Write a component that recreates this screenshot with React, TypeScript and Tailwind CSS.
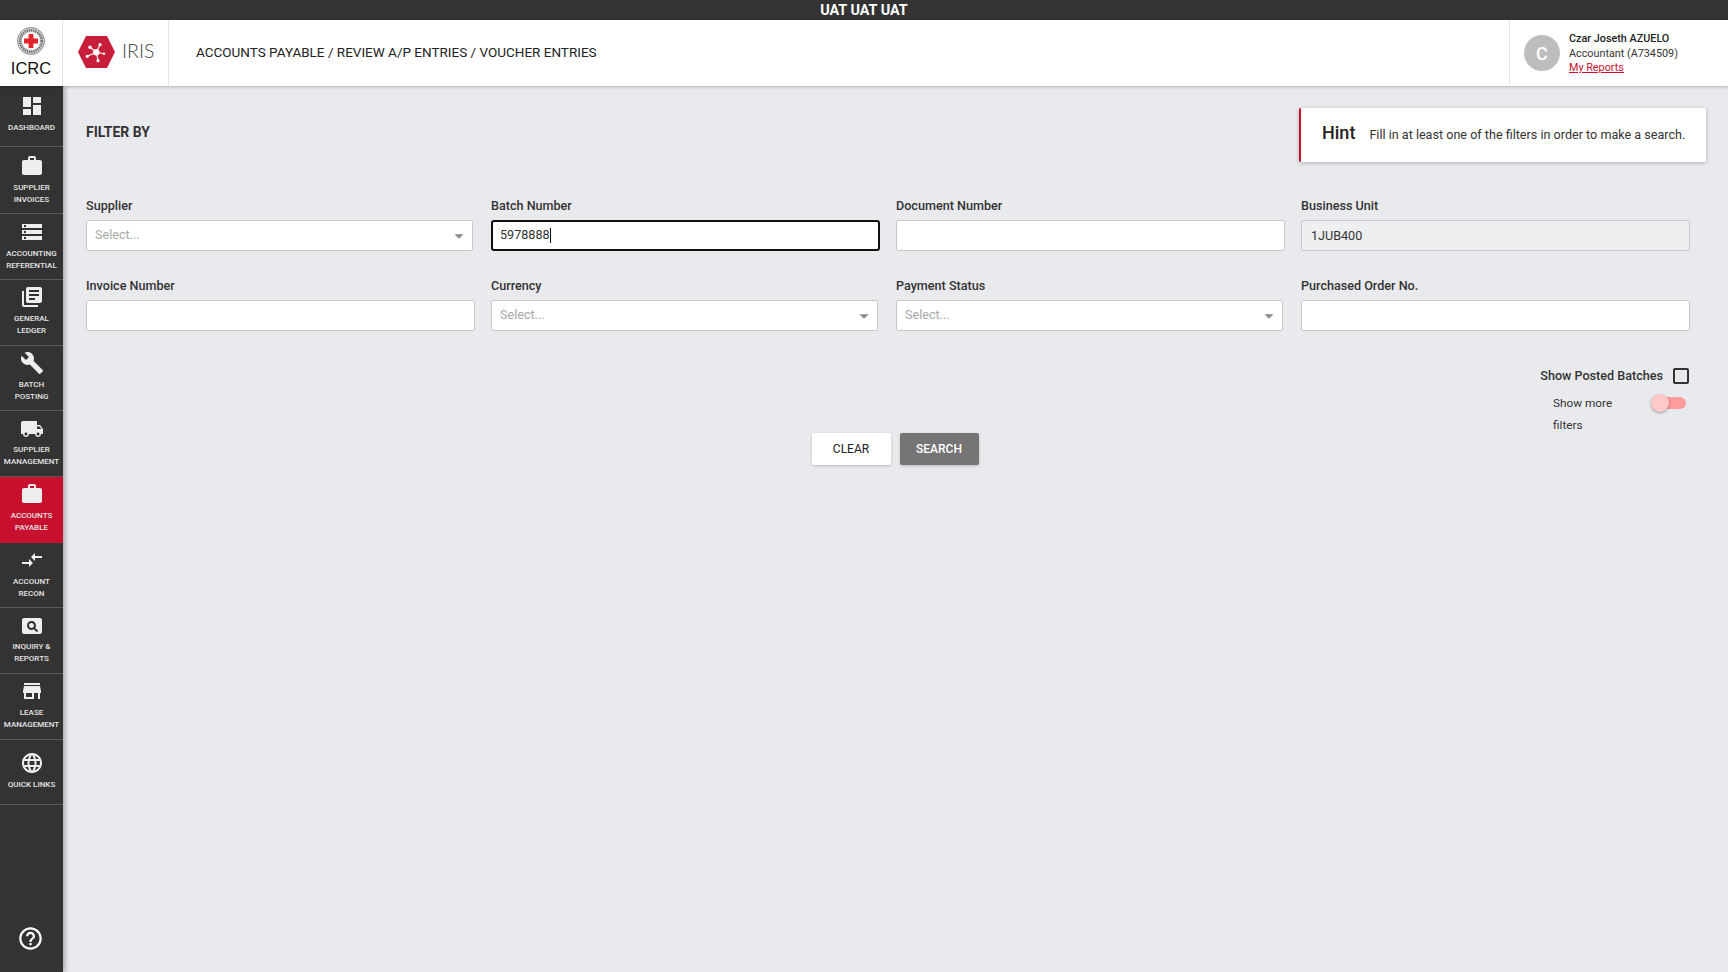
import React from "react";
import {
  MdDashboard, MdWork, MdStorage, MdLibraryBooks, MdBuild, MdLocalShipping,
  MdCompareArrows, MdPageview, MdStore, MdLanguage, MdHelpOutline, MdArrowDropDown,
} from "react-icons/md";

const NAV = [
  { icon: MdDashboard, lines: ["DASHBOARD"], h: "h-[61px]", pt: "pt-[8px]", mt: "mt-[4px]" },
  { icon: MdWork, lines: ["SUPPLIER", "INVOICES"], h: "h-[67px]", pt: "pt-[7px]", mt: "mt-[4px]" },
  { icon: MdStorage, lines: ["ACCOUNTING", "REFERENTIAL"], h: "h-[66px]", pt: "pt-[6px]", mt: "mt-[4px]" },
  { icon: MdLibraryBooks, lines: ["GENERAL", "LEDGER"], h: "h-[66px]", pt: "pt-[5px]", mt: "mt-[4px]" },
  { icon: MdBuild, lines: ["BATCH", "POSTING"], h: "h-[65px]", pt: "pt-[5px]", mt: "mt-[4px]" },
  { icon: MdLocalShipping, lines: ["SUPPLIER", "MANAGEMENT"], h: "h-[66px]", pt: "pt-[6px]", mt: "mt-[3px]" },
  { icon: MdWork, lines: ["ACCOUNTS", "PAYABLE"], h: "h-[66px]", pt: "pt-[5px]", mt: "mt-[4px]", active: true },
  { icon: MdCompareArrows, lines: ["ACCOUNT", "RECON"], h: "h-[65px]", pt: "pt-[5px]", mt: "mt-[4px]" },
  { icon: MdPageview, lines: ["INQUIRY &", "REPORTS"], h: "h-[66px]", pt: "pt-[6px]", mt: "mt-[3px]" },
  { icon: MdStore, lines: ["LEASE", "MANAGEMENT"], h: "h-[66px]", pt: "pt-[5px]", mt: "mt-[4px]" },
  { icon: MdLanguage, lines: ["QUICK LINKS"], h: "h-[65px]", pt: "pt-[11px]", mt: "mt-[4px]" },
];

function Field({ label, children }: { label: string; children: React.ReactNode }) {
  return (
    <div className="flex flex-col">
      <label className="mb-[4px] h-[20px] text-[12.6px] font-medium leading-[20px] text-[#333333]">{label}</label>
      {children}
    </div>
  );
}

function TextBox({ value, disabled }: { value?: string; disabled?: boolean }) {
  return (
    <div className={`h-[31px] w-full rounded-[2px] border border-[#c8c8c8] px-[9px] text-[12.6px] leading-[29px] text-[#333333] ${disabled ? "bg-[#eeeff1]" : "bg-white"}`}>
      {value}
    </div>
  );
}

function SelectBox() {
  return (
    <div className="flex h-[31px] w-[387px] items-center justify-between rounded-[2px] border border-[#c8c8c8] bg-white pl-[8px] pr-[2px] text-[12.6px] text-[#a8a8a8]">
      <span>Select...</span>
      <MdArrowDropDown className="text-[#8a8a8a]" size={22} />
    </div>
  );
}

function Emblem() {
  return (
    <svg width="28" height="28" viewBox="0 0 28 28">
      <circle cx="14" cy="14" r="13.5" fill="#dcdcdc" stroke="#8a8a8a" strokeWidth="1" />
      <circle cx="14" cy="14" r="10.8" fill="none" stroke="#666" strokeWidth="2.6" strokeDasharray="1.3 0.9" />
      <circle cx="14" cy="14" r="8.8" fill="#fff" />
      <path d="M11.6 7h4.8v4.6H21v4.8h-4.6V21h-4.8v-4.6H7v-4.8h4.6z" fill="#e3232b" />
    </svg>
  );
}

function IrisLogo() {
  return (
    <svg width="37" height="32" viewBox="0 0 37 32">
      <path d="M8 0h21L37 16 29 32H8L0 16z" fill="#c81e3a" />
      <g stroke="#fff" strokeWidth="1.1">
        <path d="M18.3 16.3L12 11.3M18.3 16.3L22 8.7M18.3 16.3L26 17.7M18.3 16.3L20 24.7M18.3 16.3L9.3 20.3" />
      </g>
      <g fill="#fff">
        <circle cx="18.3" cy="16.3" r="3.2" />
        <circle cx="12" cy="11.3" r="1.7" />
        <circle cx="22" cy="8.7" r="1.6" />
        <circle cx="26" cy="17.7" r="1.3" />
        <circle cx="20" cy="24.7" r="1.6" />
        <circle cx="9.3" cy="20.3" r="1.6" />
      </g>
    </svg>
  );
}

export default function App() {
  return (
    <div className="flex h-[972px] w-[1728px] flex-col overflow-hidden bg-[#e9eaee] font-['Roboto',sans-serif]">
      <div className="h-[20px] bg-[#333333] pt-px text-center text-[14.4px] font-bold leading-[20px] text-white">UAT UAT UAT</div>

      <header className="relative z-20 flex h-[66px] items-stretch bg-white shadow-[0_1px_3px_rgba(0,0,0,0.25)]">
        <div className="flex w-[63px] flex-col items-center border-r border-[#e4e4e4] pt-[7px]">
          <Emblem />
          <span className="mt-[3px] font-['Liberation_Sans',sans-serif] text-[16.5px] leading-[20px] text-[#111111]">ICRC</span>
        </div>
        <div className="flex w-[106px] items-center border-r border-[#e4e4e4] pb-[3px] pl-[15px]">
          <IrisLogo />
          <span className="mb-[2px] ml-[7px] font-['Lato',sans-serif] text-[19.5px] font-light text-[#444444]">IRIS</span>
        </div>
        <div className="flex flex-1 items-center pb-px pl-[27px] text-[13.5px] text-[#222222]">
          ACCOUNTS PAYABLE / REVIEW A/P ENTRIES / VOUCHER ENTRIES
        </div>
        <div className="flex w-[219px] items-center border-l border-[#e4e4e4] pl-[14px]">
          <div className="flex h-[36px] w-[36px] items-center justify-center rounded-full bg-[#bdbdbd] text-[18px] font-medium text-white">C</div>
          <div className="ml-[9px] flex flex-col text-[10.8px] leading-[15px]">
            <span className="font-medium text-[#222222]">Czar Joseth AZUELO</span>
            <span className="text-[#333333]">Accountant (A734509)</span>
            <a className="mt-[-1px] text-[#c8102e] underline">My Reports</a>
          </div>
        </div>
      </header>

      <div className="flex flex-1">
        <nav className="relative z-10 flex h-[886px] w-[63px] flex-col bg-[#333333] shadow-[2px_0_5px_rgba(0,0,0,0.3)]">
          {NAV.map((item, i) => {
            const Icon = item.icon;
            return (
              <div
                key={i}
                className={`flex ${item.h} flex-col items-center border-b ${item.pt} ${item.active ? "border-[#c8102e] bg-[#c8102e]" : "border-[#5a5a5a]"}`}
              >
                <Icon size={24} className="text-[#eeeeee]" />
                <div className={`${item.mt} whitespace-nowrap text-center text-[8px] font-medium leading-[11.5px] text-[#e4e4e4]`}>
                  {item.lines.map((l) => (
                    <div key={l}>{l}</div>
                  ))}
                </div>
              </div>
            );
          })}
          <div className="mt-auto flex justify-center pb-[20px] pr-[3px]">
            <MdHelpOutline size={27} className="text-white" />
          </div>
        </nav>

        <main className="flex-1 pl-[23px] pr-[38px]">
          <div className="flex h-[110px] items-start justify-between">
            <h2 className="mt-[37px] text-[14px] font-bold leading-[18px] text-[#333333]">FILTER BY</h2>
            <div className="mr-[-16px] mt-[22px] flex h-[54px] w-[407px] items-center rounded-[2px] border-l-2 border-[#c8102e] bg-white pl-[21px] shadow-[0_1px_4px_rgba(0,0,0,0.25)]">
              <span className="mt-[-6px] text-[18px] font-medium text-[#222222]">Hint</span>
              <span className="ml-[14px] text-[12.6px] text-[#333333]">Fill in at least one of the filters in order to make a search.</span>
            </div>
          </div>

          <div className="grid grid-cols-4 gap-x-4 gap-y-[25px]">
            <Field label="Supplier"><SelectBox /></Field>
            <Field label="Batch Number">
              <div className="flex h-[31px] items-center rounded-[3px] border-2 border-[#111111] bg-white px-[7px] text-[12.6px] text-[#333333]">
                5978888<span className="h-[15px] w-px bg-[#111111]" />
              </div>
            </Field>
            <Field label="Document Number"><TextBox /></Field>
            <Field label="Business Unit"><TextBox value="1JUB400" disabled /></Field>
            <Field label="Invoice Number"><TextBox /></Field>
            <Field label="Currency"><SelectBox /></Field>
            <Field label="Payment Status"><SelectBox /></Field>
            <Field label="Purchased Order No."><TextBox /></Field>
          </div>

          <div className="mt-[36px] flex items-center justify-end">
            <span className="text-[12.6px] font-medium text-[#333333]">Show Posted Batches</span>
            <span className="ml-[10px] mr-[1px] h-[16px] w-[16px] rounded-[2px] border-2 border-[#333333]" />
          </div>

          <div className="relative flex justify-center">
            <div className="absolute right-0 top-[6px] w-[137px] text-[11.8px] leading-[22px] text-[#333333]">
              <div className="w-[70px]">Show more filters</div>
              <div className="absolute right-[4px] top-[5px] h-[12px] w-[33px] rounded-full bg-[#ff9c9c]">
                <span className="absolute left-[-2px] top-[-3px] h-[18px] w-[18px] rounded-full bg-[#ffc9c9] shadow-[0_1px_3px_rgba(0,0,0,0.35)]" />
              </div>
            </div>
            <div className="mt-[47px] flex gap-[9px] pl-[14px]">
              <button className="h-[32px] w-[79px] rounded-[2px] bg-white text-[12px] text-[#222222] shadow-[0_1px_3px_rgba(0,0,0,0.2)]">CLEAR</button>
              <button className="h-[32px] w-[79px] rounded-[2px] bg-[#757575] text-[12px] font-medium text-white shadow-[0_1px_3px_rgba(0,0,0,0.2)]">SEARCH</button>
            </div>
          </div>
        </main>
      </div>
    </div>
  );
}
